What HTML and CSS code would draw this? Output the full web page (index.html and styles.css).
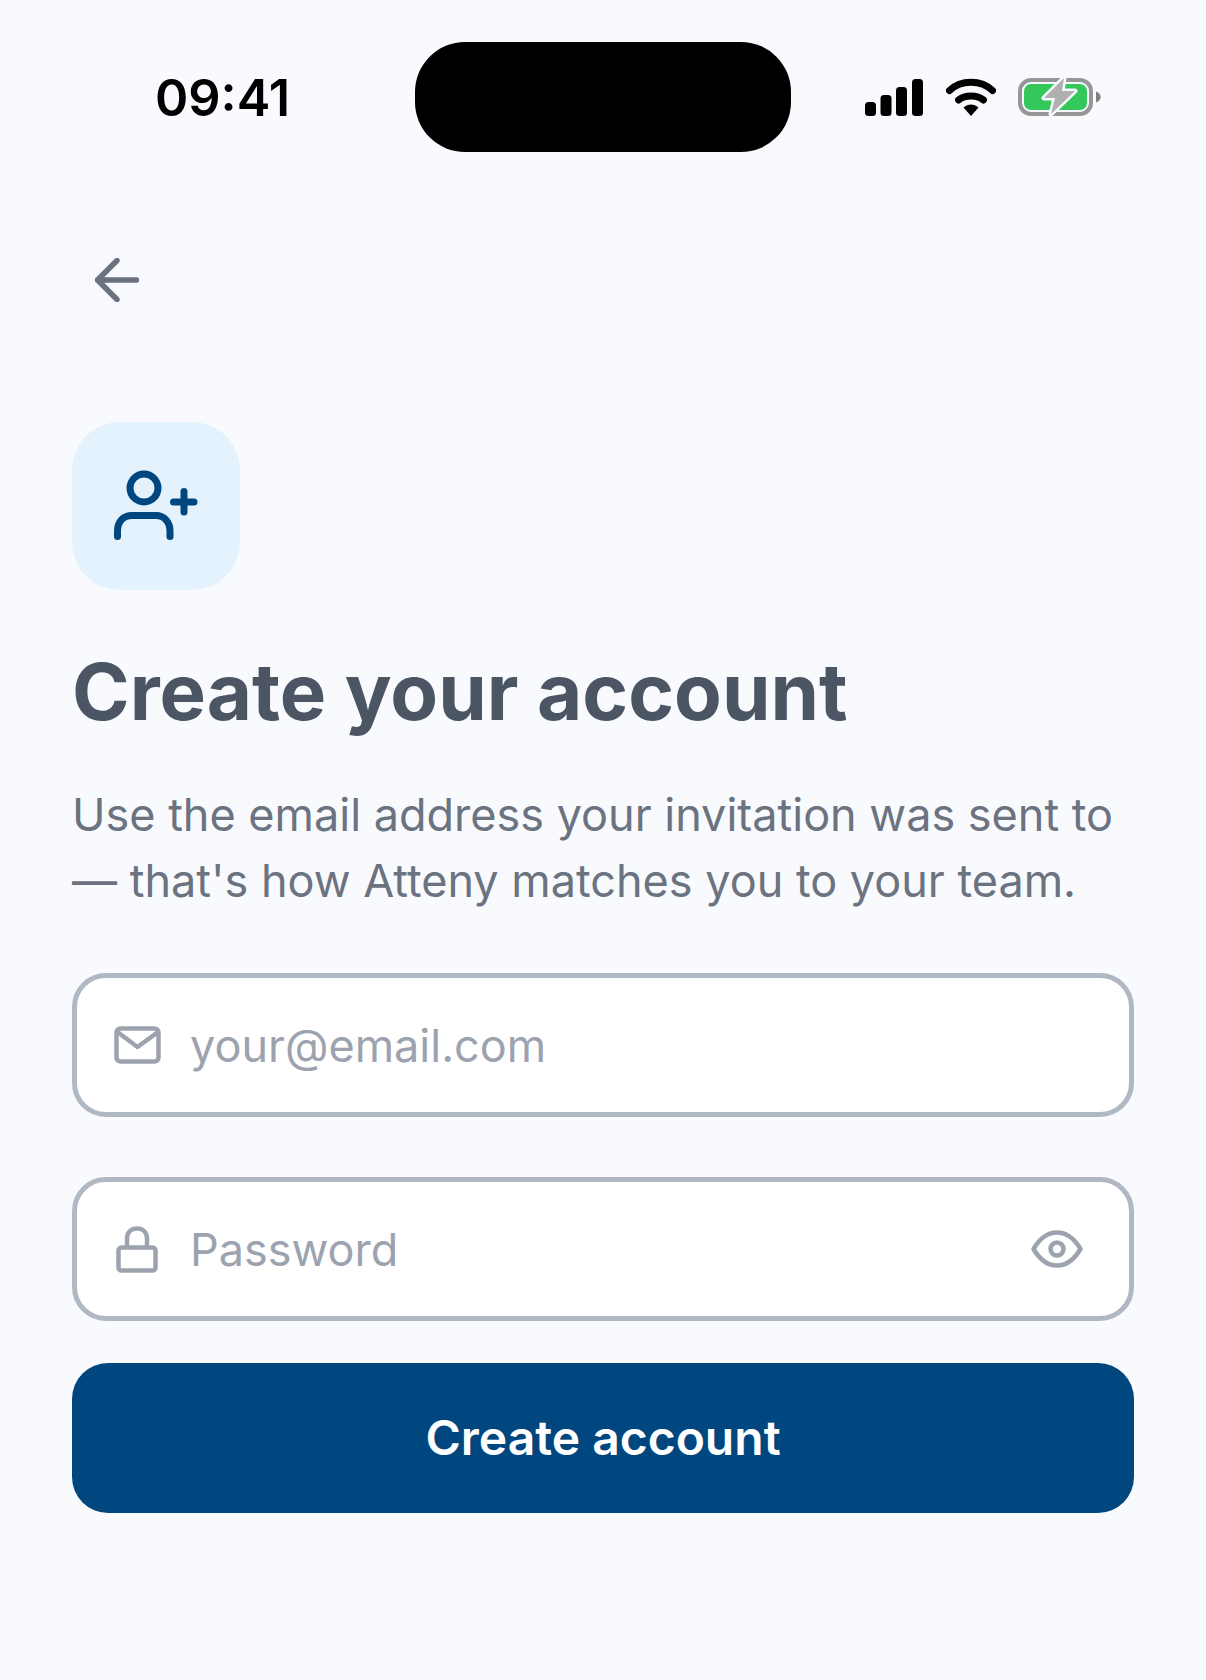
FILE: index.html
```html
<!DOCTYPE html>
<html lang="en">
<head>
  <meta charset="UTF-8">
  <title>Create your account</title>
  <link rel="stylesheet" href="styles.css">
</head>
<body>

  <div class="status-bar">
    <span class="time">09:41</span>
    <div class="island"></div>
    <div class="status-icons">
      <svg class="signal" width="58" height="37" viewBox="0 0 58 37">
        <rect x="0" y="23" width="11" height="14" rx="3.5"/>
        <rect x="15.5" y="16" width="11" height="21" rx="3.5"/>
        <rect x="31" y="8" width="11" height="29" rx="3.5"/>
        <rect x="47" y="0" width="11" height="37" rx="3.5"/>
      </svg>
      <svg class="wifi" width="50" height="38" viewBox="0 0 50 38">
        <path d="M3.500 12.500C15 1.500 35 1.500 46.500 12.500" fill="none" stroke="#000" stroke-width="7" stroke-linecap="round"/>
        <path d="M12.500 22C19 16.500 31 16.500 37.500 22" fill="none" stroke="#000" stroke-width="7" stroke-linecap="round"/>
        <path d="M17.500 29.500C22 25.500 28 25.500 32.500 29.500L25 38Z"/>
      </svg>
      <svg class="battery" width="83" height="40" viewBox="0 0 83 40">
        <rect x="2" y="3" width="71" height="34" rx="11" fill="none" stroke="#969696" stroke-width="4"/>
        <rect x="6" y="7" width="63" height="26" rx="7" fill="#34c759"/>
        <path d="M78 14.500c3 1 4.700 3 4.700 5.500s-1.700 4.500-4.700 5.500Z" fill="#808080"/>
        <path d="M46 1L26 21H37L33 37L57 14H44Z" fill="#b0b0b0" stroke="#f8fafd" stroke-width="5" stroke-linejoin="round" paint-order="stroke"/>
      </svg>
    </div>
  </div>

  <div class="content">
    <button class="back" aria-label="Back">
      <svg width="44" height="44" viewBox="0 0 44 44" fill="none" stroke="#6b7280" stroke-width="5.500" stroke-linecap="round" stroke-linejoin="round">
        <path d="M41.500 22H2.500M22 2.500L2.500 22L22 41.500"/>
      </svg>
    </button>

    <div class="icon-tile">
      <svg width="168" height="168" viewBox="0 0 168 168" fill="none" stroke="#00467f" stroke-width="7" stroke-linecap="round">
        <circle cx="72" cy="66" r="14"/>
        <path d="M45.500 114.500V109C45.500 100 51 93.500 60 93.500H84C92 93.500 98 100 98 109V114.500"/>
        <path d="M101.500 80H122M112 69.500V90"/>
      </svg>
    </div>

    <h1>Create your account</h1>
    <p class="intro">Use the email address your invitation was sent to<br>— that's how Atteny matches you to your team.</p>

    <form class="signup">
      <label class="field">
        <svg width="48" height="38" viewBox="0 0 48 38" fill="none" stroke="#9ca3af" stroke-width="4.500" stroke-linecap="round" stroke-linejoin="round">
          <rect x="2.500" y="2.500" width="42" height="33" rx="4"/>
          <path d="M3.500 6L23.500 21L44 6"/>
        </svg>
        <input type="email" placeholder="your@email.com">
      </label>
      <label class="field">
        <svg width="48" height="47" viewBox="0 0 48 47" fill="none" stroke="#9ca3af" stroke-width="4.500" stroke-linejoin="round">
          <rect x="4.500" y="21.500" width="37" height="23" rx="3"/>
          <path d="M13 21.500V12.500C13 6 17.500 2.500 23 2.500S33 6 33 12.500V21.500"/>
        </svg>
        <input type="password" placeholder="Password">
        <svg class="eye" width="52" height="38" viewBox="0 0 52 38" fill="none" stroke="#9ca3af" stroke-width="4.500" stroke-linejoin="round">
          <path d="M2.500 19C9 8 17 2.500 26 2.500S43 8 49.500 19C43 30 35 35.500 26 35.500S9 30 2.500 19Z"/>
          <circle cx="26" cy="19" r="6.500"/>
        </svg>
      </label>
      <button type="button" class="submit">Create account</button>
    </form>
  </div>

</body>
</html>
```

FILE: styles.css
```css
* {
  box-sizing: border-box;
}

body {
  margin: 0;
  padding-top: 42px;
  min-height: 1680px;
  background-color: #f8fafd;
  font-family: Inter, "Liberation Sans", sans-serif;
}

.status-bar {
  display: flex;
  align-items: center;
  height: 110px;
  padding-left: 155px;
}

.time {
  width: 260px;
  font-size: 50.500px;
  font-weight: 600;
  color: #000;
}

.island {
  width: 376px;
  height: 110px;
  border-radius: 50px;
  background-color: #000;
}

.status-icons {
  display: flex;
  align-items: center;
  margin-left: 74px;
}

.wifi {
  margin-left: 23px;
}

.battery {
  margin-left: 22px;
}

.content {
  padding: 106px 72px 0;
}

.back {
  display: block;
  padding: 0;
  margin: 0 0 120px 23px;
  height: 44px;
  border: 0;
  background: none;
}

.icon-tile {
  width: 168px;
  height: 168px;
  border-radius: 48px;
  background-color: #e3f2fd;
}

h1 {
  margin: 56px 0 0;
  font-size: 78px;
  line-height: 92px;
  font-weight: 700;
  color: #4b5563;
}

.intro {
  margin: 44px 0 0;
  font-size: 45px;
  line-height: 66px;
  color: #6b7280;
}

.signup {
  display: flex;
  flex-direction: column;
  margin-top: 59px;
}

.field {
  display: flex;
  align-items: center;
  height: 144px;
  margin-bottom: 60px;
  padding: 0 46px 0 37px;
  border: 5px solid #b0b8c4;
  border-radius: 34px;
  background-color: #fff;
}

.field + .field {
  margin-bottom: 42px;
}

.field input {
  flex: 1;
  min-width: 0;
  margin-left: 28px;
  padding: 0;
  border: 0;
  outline: 0;
  background: none;
  font-family: inherit;
  font-size: 45px;
  color: #374151;
}

.field input::placeholder {
  color: #9ca3af;
  opacity: 1;
}

.submit {
  height: 150px;
  padding-bottom: 2px;
  border: 0;
  border-radius: 36px;
  background-color: #00467f;
  font-family: inherit;
  font-size: 48px;
  font-weight: 600;
  color: #fff;
}
```
